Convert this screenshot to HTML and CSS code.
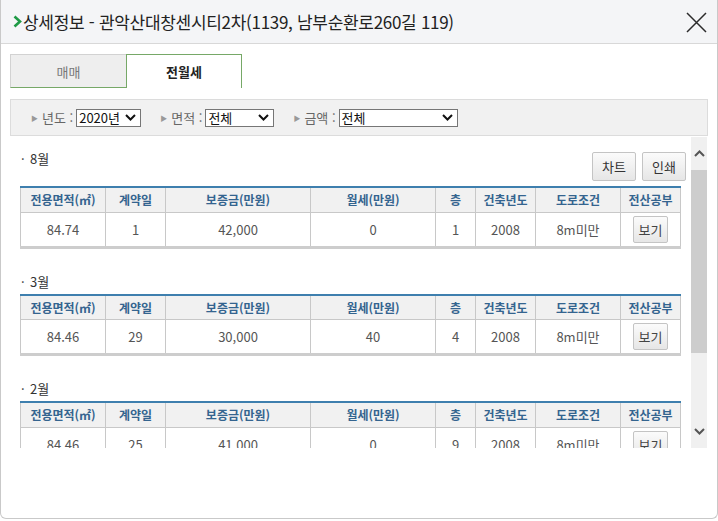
FILE: index.html
```html
<!DOCTYPE html>
<html lang="ko">
<head>
    <meta charset="UTF-8">
    <title>상세정보</title>
    <link rel="stylesheet" href="styles.css">
</head>
<body>
    <div class="dialog">
        <div class="dlg-head">
            <h2 class="dlg-title">
                <svg class="title-mark" width="9" height="13" viewBox="0 0 9 13"><polyline points="1.5,1.5 7,6.5 1.5,11.5" fill="none" stroke="#1e9a45" stroke-width="2.6"/></svg>상세정보 - 관악산대창센시티2차(1139, 남부순환로260길 119)
            </h2>
            <span class="dlg-close">
                <svg width="21" height="21" viewBox="0 0 21 21"><path d="M1 1 L20 20 M20 1 L1 20" stroke="#2b2b2b" stroke-width="1.5"/></svg>
            </span>
        </div>

        <div class="dlg-body">
            <ul class="tabs">
                <li class="tab">매매</li>
                <li class="tab tab-on">전월세</li>
            </ul>

            <div class="filter">
                <span class="f-item">
                    <span class="f-arrow">▶</span>
                    <span class="f-label">년도 :</span>
                    <span class="f-select w-year">2020년<svg class="f-caret" width="11" height="7" viewBox="0 0 11 7"><polyline points="1,1 5.5,5.5 10,1" fill="none" stroke="#111" stroke-width="2"/></svg></span>
                </span>
                <span class="f-item">
                    <span class="f-arrow">▶</span>
                    <span class="f-label">면적 :</span>
                    <span class="f-select w-area">전체<svg class="f-caret" width="11" height="7" viewBox="0 0 11 7"><polyline points="1,1 5.5,5.5 10,1" fill="none" stroke="#111" stroke-width="2"/></svg></span>
                </span>
                <span class="f-item">
                    <span class="f-arrow">▶</span>
                    <span class="f-label">금액 :</span>
                    <span class="f-select w-price">전체<svg class="f-caret" width="11" height="7" viewBox="0 0 11 7"><polyline points="1,1 5.5,5.5 10,1" fill="none" stroke="#111" stroke-width="2"/></svg></span>
                </span>
            </div>

            <div class="list-wrap">
                <div class="list">
                    <!-- 8월 -->
                    <div class="month-head">
                        <h3 class="month"><span class="dot">·</span>8월</h3>
                        <div class="month-btns">
                            <button class="btn">차트</button>
                            <button class="btn">인쇄</button>
                        </div>
                    </div>
                    <table class="deal">
                        <colgroup>
                            <col style="width:85px"><col style="width:60px"><col style="width:145px"><col style="width:125px">
                            <col style="width:40px"><col style="width:60px"><col style="width:85px"><col style="width:60px">
                        </colgroup>
                        <thead>
                            <tr><th>전용면적(㎡)</th><th>계약일</th><th>보증금(만원)</th><th>월세(만원)</th><th>층</th><th>건축년도</th><th>도로조건</th><th>전산공부</th></tr>
                        </thead>
                        <tbody>
                            <tr><td>84.74</td><td>1</td><td>42,000</td><td>0</td><td>1</td><td>2008</td><td>8m미만</td><td><button class="btn btn-sm">보기</button></td></tr>
                        </tbody>
                    </table>

                    <!-- 3월 -->
                    <h3 class="month month-gap"><span class="dot">·</span>3월</h3>
                    <table class="deal">
                        <colgroup>
                            <col style="width:85px"><col style="width:60px"><col style="width:145px"><col style="width:125px">
                            <col style="width:40px"><col style="width:60px"><col style="width:85px"><col style="width:60px">
                        </colgroup>
                        <thead>
                            <tr><th>전용면적(㎡)</th><th>계약일</th><th>보증금(만원)</th><th>월세(만원)</th><th>층</th><th>건축년도</th><th>도로조건</th><th>전산공부</th></tr>
                        </thead>
                        <tbody>
                            <tr><td>84.46</td><td>29</td><td>30,000</td><td>40</td><td>4</td><td>2008</td><td>8m미만</td><td><button class="btn btn-sm">보기</button></td></tr>
                        </tbody>
                    </table>

                    <!-- 2월 -->
                    <h3 class="month month-gap"><span class="dot">·</span>2월</h3>
                    <table class="deal">
                        <colgroup>
                            <col style="width:85px"><col style="width:60px"><col style="width:145px"><col style="width:125px">
                            <col style="width:40px"><col style="width:60px"><col style="width:85px"><col style="width:60px">
                        </colgroup>
                        <thead>
                            <tr><th>전용면적(㎡)</th><th>계약일</th><th>보증금(만원)</th><th>월세(만원)</th><th>층</th><th>건축년도</th><th>도로조건</th><th>전산공부</th></tr>
                        </thead>
                        <tbody>
                            <tr><td>84.46</td><td>25</td><td>41,000</td><td>0</td><td>9</td><td>2008</td><td>8m미만</td><td><button class="btn btn-sm">보기</button></td></tr>
                        </tbody>
                    </table>
                </div>

                <div class="vscroll">
                    <span class="vs-btn"><svg width="11" height="7" viewBox="0 0 11 7"><polyline points="1,6 5.5,1.5 10,6" fill="none" stroke="#555" stroke-width="2"/></svg></span>
                    <span class="vs-track"><span class="vs-thumb"></span></span>
                    <span class="vs-btn"><svg width="11" height="7" viewBox="0 0 11 7"><polyline points="1,1 5.5,5.5 10,1" fill="none" stroke="#555" stroke-width="2"/></svg></span>
                </div>
            </div>
        </div>
    </div>
</body>
</html>
```

FILE: styles.css
```css
* {
    margin: 0;
    padding: 0;
    box-sizing: border-box;
}

body {
    font-family: "Noto Sans CJK KR", "Noto Sans", sans-serif;
    background: #fff;
    color: #333;
}

.dialog {
    width: 718px;
    height: 519px;
    background: #fff;
    border: 1px solid #c9c9c9;
    border-top: none;
    border-radius: 0 0 6px 6px;
    overflow: hidden;
}

/* 상단 타이틀 */
.dlg-head {
    height: 44px;
    background: #f4f5f7;
    border-bottom: 1px solid #d8d8d8;
    display: flex;
    align-items: center;
    justify-content: space-between;
    padding: 0 10px 0 12px;
}

.dlg-title {
    font-size: 17px;
    font-weight: 400;
    color: #222;
    letter-spacing: -0.3px;
    display: flex;
    align-items: center;
}

.title-mark {
    margin-right: 1px;
}

.dlg-close {
    display: flex;
    margin-top: 1px;
}

.dlg-body {
    padding: 10px 9px 0 9px;
}

/* 탭 */
.tabs {
    list-style: none;
    display: flex;
    height: 34px;
}

.tab {
    width: 116px;
    display: flex;
    align-items: center;
    justify-content: center;
    font-size: 13px;
    color: #777;
    background: #eeeeee;
    border-top: 1px solid #d2d2d2;
    border-left: 1px solid #d2d2d2;
    border-bottom: 1px solid #76a867;
}

.tab-on {
    color: #222;
    font-weight: 700;
    background: #fff;
    border: 1px solid #76a867;
    border-bottom: none;
}

/* 검색조건 */
.filter {
    margin-top: 11px;
    height: 37px;
    background: #f1f1f1;
    border: 1px solid #dcdcdc;
    display: flex;
    align-items: center;
    padding-left: 20px;
    gap: 19px;
}

.f-item {
    display: flex;
    align-items: center;
    font-size: 13px;
    color: #666;
    white-space: nowrap;
}

.f-arrow {
    font-size: 7px;
    color: #999;
    margin-right: 4px;
}

.f-select {
    height: 18px;
    margin-left: 3px;
    background: #fff;
    border: 1px solid #767676;
    display: flex;
    align-items: center;
    justify-content: space-between;
    padding: 0 4px 0 2px;
    font-size: 13px;
    color: #111;
}

.w-year { width: 65px; }
.w-area { width: 69px; }
.w-price { width: 119px; }

/* 목록 */
.list-wrap {
    display: flex;
    height: 311px;
    margin-top: 1px;
}

.list {
    flex: 1;
    overflow: hidden;
    padding-left: 10px;
}

.month-head {
    display: flex;
    justify-content: space-between;
    align-items: flex-start;
    width: 666px;
    height: 49px;
}

.month {
    font-size: 13px;
    font-weight: 400;
    color: #333;
    line-height: 18px;
    padding-top: 13px;
}

.dot {
    display: inline-block;
    width: 10px;
    padding-left: 1px;
}

.month-gap {
    padding-top: 0;
    margin: 24px 0 3px;
}

.month-btns {
    display: flex;
    gap: 6px;
    margin-top: 15px;
}

.btn {
    font-family: inherit;
    font-size: 13px;
    color: #333;
    width: 44px;
    height: 29px;
    border: 1px solid #c4c4c4;
    border-radius: 2px;
    background: linear-gradient(#fbfbfb, #e6e6e6);
    cursor: pointer;
}

.btn-sm {
    width: 35px;
    height: 27px;
    color: #444;
}

.deal {
    width: 660px;
    border-collapse: collapse;
    table-layout: fixed;
    border-bottom: 3px solid #cdcdcd;
}

.deal th {
    height: 25px;
    background: #f1f1f1;
    border: 1px solid #c8c8c8;
    border-top: 2px solid #3e7fae;
    font-size: 12px;
    font-weight: 700;
    color: #34648f;
    text-align: center;
}

.deal td {
    height: 35px;
    border: 1px solid #c8c8c8;
    border-bottom: none;
    font-size: 13px;
    color: #555;
    text-align: center;
}

/* 세로 스크롤 */
.vscroll {
    width: 16px;
    margin-right: 1px;
    background: #f0f0f0;
    display: flex;
    flex-direction: column;
}

.vs-btn {
    height: 33px;
    display: flex;
    align-items: center;
    justify-content: center;
}

.vs-track {
    flex: 1;
}

.vs-thumb {
    display: block;
    height: 183px;
    background: #cdcdcd;
}
```
